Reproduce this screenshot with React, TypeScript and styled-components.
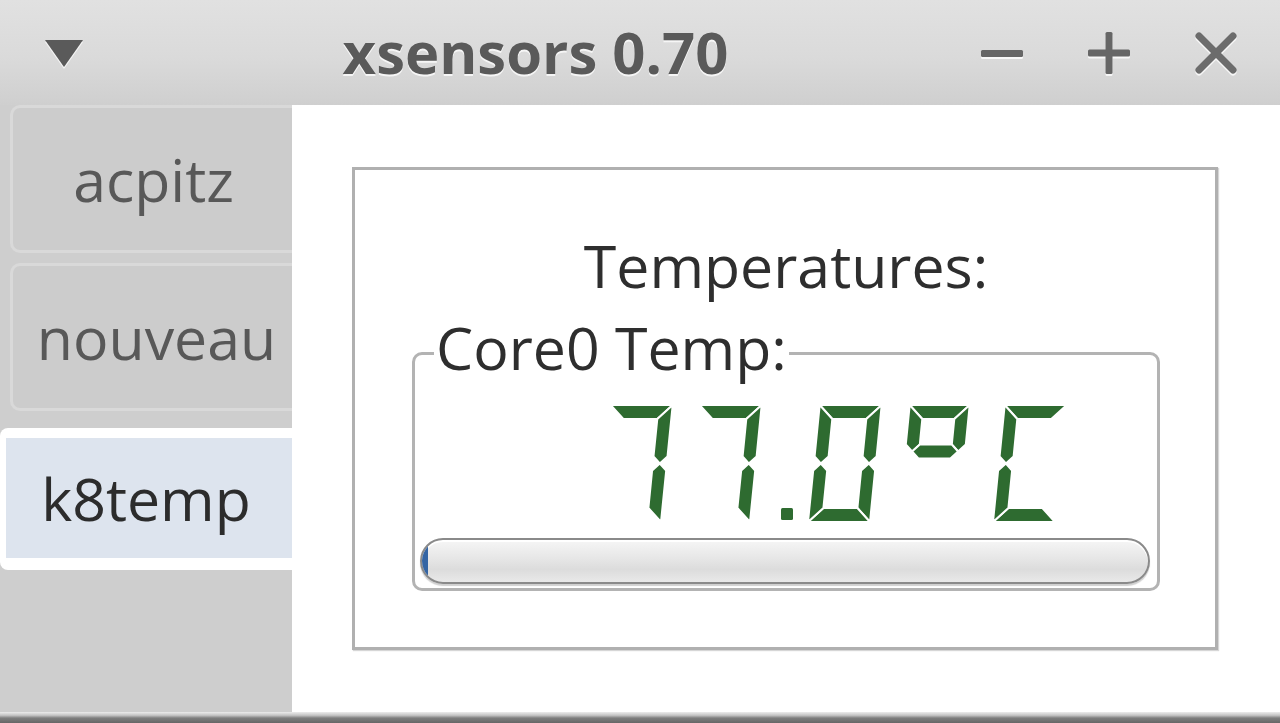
import React from "react";
import styled, { createGlobalStyle } from "styled-components";

const Global = createGlobalStyle`
  html, body { margin: 0; padding: 0; background: #ffffff; }
  body { font-family: "Open Sans", "Noto Sans", "DejaVu Sans", sans-serif; }
  * { box-sizing: border-box; }
`;

const Window = styled.div`
  width: 1280px;
  height: 723px;
  display: flex;
  flex-direction: column;
  overflow: hidden;
  background: #ffffff;
`;

const TitleBar = styled.div`
  height: 105px;
  flex: none;
  display: flex;
  align-items: center;
  padding: 0 11px 0 10px;
  background: linear-gradient(to bottom, #e1e1e1 0%, #dadada 55%, #cfcfcf 100%);
`;

const TitleCell = styled.div`
  width: 107px;
  height: 105px;
  flex: none;
  display: flex;
  align-items: center;
  justify-content: center;
`;

const Title = styled.div`
  flex: 1;
  text-align: center;
  padding-left: 6px;
  font-family: "Open Sans", "Noto Sans", sans-serif;
  font-weight: 700;
  font-size: 58px;
  line-height: 80px;
  color: #5a5a5a;
  text-shadow: 0 2px 0 rgba(255, 255, 255, 0.75);
  margin-top: -2px;
`;

const Body = styled.div`
  flex: 1;
  display: flex;
  min-height: 0;
`;

const Sidebar = styled.div`
  width: 292px;
  flex: none;
  background: #cecece;
  display: flex;
  flex-direction: column;
`;

const Tab = styled.div<{ $shift?: number }>`
  height: 148px;
  margin-left: 10px;
  margin-bottom: 10px;
  border: 3px solid #d9d9d9;
  border-right: none;
  border-radius: 10px 0 0 10px;
  background: #cccccc;
  display: flex;
  align-items: center;
  justify-content: center;
  padding-left: ${(p) => p.$shift ?? 0}px;
  font-size: 59px;
  line-height: 80px;
  color: #585858;
`;

const ActiveTab = styled.div`
  margin-top: 7px;
  background: #ffffff;
  border-radius: 8px 0 0 8px;
  padding: 10px 0 12px 6px;
`;

const ActiveTabInner = styled.div`
  height: 120px;
  background: #dde4ee;
  display: flex;
  align-items: center;
  justify-content: center;
  padding-right: 6px;
  font-size: 59px;
  line-height: 80px;
  color: #2c2c2c;
`;

const Main = styled.div`
  flex: 1;
  background: #ffffff;
  padding: 62px 62px 0 60px;
`;

const Frame = styled.div`
  border: 3px solid #b0b0b0;
  box-shadow: 1px 1px 1px #d6d6d6;
  padding: 0 55px 56px 57px;
  display: flex;
  flex-direction: column;
`;

const Heading = styled.div`
  margin-top: 55px;
  text-align: center;
  font-size: 59px;
  line-height: 80px;
  color: #2e2e2e;
`;

const GroupBox = styled.div`
  position: relative;
  margin-top: 47px;
  border: 3px solid #b3b3b3;
  border-radius: 10px;
  padding: 50px 7px 4px 5px;
  display: flex;
  flex-direction: column;
`;

const GroupLabel = styled.div`
  position: absolute;
  left: 19px;
  top: -48px;
  padding: 0 2px;
  background: #ffffff;
  font-size: 59px;
  line-height: 80px;
  height: 70px;
  color: #2e2e2e;
`;

const Display = styled.svg`
  display: block;
  margin-left: 175px;
  width: 480px;
  height: 120px;
`;

const Bar = styled.div`
  margin-top: 13px;
  height: 46px;
  border: 2px solid #8a8a8a;
  border-radius: 23px;
  background: linear-gradient(to bottom, #f6f6f6 0%, #e6e6e6 45%, #dcdcdc 70%, #e9e9e9 100%);
  box-shadow: inset 0 2px 0 #ffffff, 0 2px 1px #d0d0d0;
  overflow: hidden;
  display: flex;
`;

const BarFill = styled.div<{ $pct: number }>`
  width: ${(p) => p.$pct}%;
  background: #3465a4;
  border-radius: 20px 0 0 20px;
`;

const BottomEdge = styled.div`
  height: 11px;
  flex: none;
  background: linear-gradient(to bottom, #ececec 0%, #c4c4c4 30%, #7e7e7e 55%, #666666 100%);
`;

const ButtonIcon = styled.svg`
  display: block;
  overflow: visible;
`;

/* ---------- seven segment display ---------- */

const SLANT = 0.1;
const BASE = 117;
const T = 14;

type Pt = [number, number];

function segments(W: number, H: number): Record<string, Pt[]> {
  const m = H / 2;
  const t = T;
  return {
    a: [[0, 0], [W, 0], [W - t, t], [t, t]],
    b: [[W, 0], [W, m - t / 2], [W - t / 2, m], [W - t, m - t / 2], [W - t, t]],
    c: [[W, H], [W, m + t / 2], [W - t / 2, m], [W - t, m + t / 2], [W - t, H - t]],
    d: [[0, H], [W, H], [W - t, H - t], [t, H - t]],
    e: [[0, H], [0, m + t / 2], [t / 2, m], [t, m + t / 2], [t, H - t]],
    f: [[0, 0], [0, m - t / 2], [t / 2, m], [t, m - t / 2], [t, t]],
    g: [[t, m - t / 2], [W - t, m - t / 2], [W - t / 2, m], [W - t, m + t / 2], [t, m + t / 2], [t / 2, m]],
  };
}

function toPoints(list: Pt[], ox: number, oy: number): string {
  return list
    .map(([x, y]) => {
      const yy = oy + y;
      const xx = ox + x + (BASE - yy) * SLANT;
      return `${xx.toFixed(1)},${yy.toFixed(1)}`;
    })
    .join(" ");
}

type Glyph = { x: number; w: number; h: number; on: string };

const GLYPHS: Glyph[] = [
  { x: 4, w: 62, h: 117, on: "abc" },
  { x: 93, w: 62, h: 117, on: "abc" },
  { x: 213, w: 62, h: 117, on: "abcdef" },
  { x: 303, w: 60, h: 93, on: "abfg" },
  { x: 398, w: 62, h: 117, on: "adef" },
];

const SevenSegment: React.FC<{ label: string }> = ({ label }) => (
  <Display viewBox="0 0 480 120" role="img" aria-label={label}>
    <title>{label}</title>
    <g fill="#2e6b30" stroke="#ffffff" strokeWidth={2} strokeLinejoin="round">
      {GLYPHS.map((gl, i) => {
        const segs = segments(gl.w, gl.h);
        return gl.on
          .split("")
          .map((k) => <polygon key={`${i}-${k}`} points={toPoints(segs[k], gl.x, 0)} />);
      })}
    </g>
    <rect x="186" y="103" width="12" height="12" rx="1.5" fill="#2e6b30" />
  </Display>
);

/* ---------- title bar icons ---------- */

const iconColor = "#666666";

const MenuIcon = () => (
  <ButtonIcon width="40" height="32" viewBox="0 0 40 32">
    <polygon points="1,3 39,3 20,30" fill="#ffffff" opacity="0.7" transform="translate(0,2)" />
    <polygon points="1,3 39,3 20,30" fill="#5a5a5a" />
  </ButtonIcon>
);

const MinIcon = () => (
  <ButtonIcon width="44" height="44" viewBox="0 0 44 44">
    <rect x="1" y="21" width="42" height="7" rx="1.5" fill="#ffffff" opacity="0.8" />
    <rect x="1" y="19" width="42" height="7" rx="1.5" fill={iconColor} />
  </ButtonIcon>
);

const MaxIcon = () => (
  <ButtonIcon width="44" height="44" viewBox="0 0 44 44">
    <g fill="#ffffff" opacity="0.8" transform="translate(0,2)">
      <rect x="1" y="18.5" width="42" height="7" rx="1.5" />
      <rect x="18.5" y="1" width="7" height="42" rx="1.5" />
    </g>
    <g fill={iconColor}>
      <rect x="1" y="18.5" width="42" height="7" rx="1.5" />
      <rect x="18.5" y="1" width="7" height="42" rx="1.5" />
    </g>
  </ButtonIcon>
);

const CloseIcon = () => (
  <ButtonIcon width="44" height="44" viewBox="0 0 44 44">
    <g stroke="#ffffff" strokeWidth="7" strokeLinecap="round" opacity="0.8" transform="translate(0,2)">
      <line x1="5" y1="5" x2="39" y2="39" />
      <line x1="39" y1="5" x2="5" y2="39" />
    </g>
    <g stroke="#6c6c6c" strokeWidth="7" strokeLinecap="round">
      <line x1="5" y1="5" x2="39" y2="39" />
      <line x1="39" y1="5" x2="5" y2="39" />
    </g>
  </ButtonIcon>
);

export default function App() {
  return (
    <>
      <Global />
      <Window>
        <TitleBar>
          <TitleCell>
            <MenuIcon />
          </TitleCell>
          <Title>xsensors 0.70</Title>
          <TitleCell>
            <MinIcon />
          </TitleCell>
          <TitleCell>
            <MaxIcon />
          </TitleCell>
          <TitleCell>
            <CloseIcon />
          </TitleCell>
        </TitleBar>
        <Body>
          <Sidebar>
            <Tab $shift={2}>acpitz</Tab>
            <Tab $shift={8}>nouveau</Tab>
            <ActiveTab>
              <ActiveTabInner>k8temp</ActiveTabInner>
            </ActiveTab>
          </Sidebar>
          <Main>
            <Frame>
              <Heading>Temperatures:</Heading>
              <GroupBox>
                <GroupLabel>Core0 Temp:</GroupLabel>
                <SevenSegment label="77.0°C" />
                <Bar>
                  <BarFill $pct={0.8} />
                </Bar>
              </GroupBox>
            </Frame>
          </Main>
        </Body>
        <BottomEdge />
      </Window>
    </>
  );
}
